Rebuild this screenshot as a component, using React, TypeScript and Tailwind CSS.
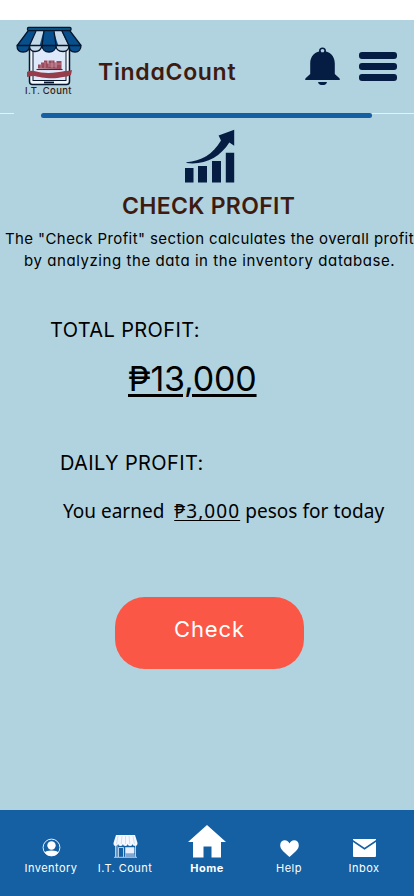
import React from "react";

function StoreLogo() {
  return (
    <svg className="block h-[62px] w-[72px]" viewBox="14 25 72 62" fill="none">
      <rect x="29.5" y="43" width="40" height="41.5" rx="3" fill="#f3f7fd" stroke="#07162d" strokeWidth="1.5" />
      <rect x="33" y="45" width="33" height="35.5" fill="#deeafb" stroke="#07162d" strokeWidth="1" />
      <path d="M44 82.5h10" stroke="#07162d" strokeWidth="1.800" />
      <path d="M38 68.5v-4h3v-2h3v-2h3.500v3h1v-3h6v2h2v-1.500h5v8z" fill="#9c4a5c" />
      <path d="M41 64v4M45 62v6M48 64h13M52 61v7M56 62v6M48 66h9" stroke="#deb9c6" strokeWidth=".5" />
      <path d="M36.500 69.500h26" stroke="#4d2535" strokeWidth="1.100" />
      <path d="M27 72q3-2 7-1c10 3 22 2 31 0q5 0 7-1l-1 5q-4 2-8 2c-12 3-23 0-29-1q-4 0-7 1z" fill="#963c4a" />
      <path d="M28 31h42l11 15H17z" fill="#07508d" />
      <path d="M35.500 31h8l-4 15h-10zM53.500 31h8l7 15h-10z" fill="#c3d8e9" />
      <g stroke="#07162d" strokeWidth="1.300" strokeLinejoin="round">
        <path d="M17 45.500c0 4 2 6.500 6 6.500 4 0 6.500-2.500 6.500-6.500z" fill="#07508d" />
        <path d="M29.500 45.500c0 4 2 6 5.500 6s6-2 7-6z" fill="#c3d8e9" />
        <path d="M42 45.500c0 4 3 6.500 7 6.500s7-2.500 7-6.500z" fill="#064178" />
        <path d="M56 45.500c0 4 3 6 7 6s6-2 6-6z" fill="#c3d8e9" />
        <path d="M69 45.500c0 4 2 6.500 6 6.500s6-3 6-6.500z" fill="#07508d" />
        <path d="M28 31 17.200 45.500M36 31l-6.500 14.500M44 31l-2 14.500M54 31l2 14.500M62 31l7 14.500M70 31l11 14.500" />
        <rect x="27.500" y="27.500" width="43.500" height="3" rx="1" fill="#0969a5" />
      </g>
    </svg>
  );
}

function Bell() {
  return (
    <svg className="block h-[38px] w-[36px]" viewBox="305 47 36 38">
      <circle cx="322.500" cy="51" r="2.700" fill="none" stroke="#061d43" strokeWidth="1.600" />
      <path d="M322.500 51c-7.500 0-12.300 5-12.300 12.500V74l-4.600 4.200q-1.200 1.900.7 1.900h32.400q1.900 0 .7-1.900L334.800 74V63.500C334.800 56 330 51 322.500 51zM318 81.900h9q-.5 3.300-4.500 3.300t-4.500-3.300z" fill="#061d43" />
      <ellipse cx="322.500" cy="51.400" rx="1.600" ry=".9" fill="#b1d3df" />
    </svg>
  );
}

function ProfitChart() {
  return (
    <svg className="block h-[54px] w-[52px]" viewBox="184 129 52 54" fill="#061d43">
      <path d="M185 168h8.500v14.500H185zM198 166h9v16.500h-9zM212 161h9v21.500h-9zM225.800 152.700h8.400v29.800h-8.400z" />
      <path d="M186.500 162.200c14.500-.7 26.500-8 34.500-21.600l-2.400-5.200 15.600-5.600v16l-4.900-3.400c-9.300 14.800-24.800 22.900-42.800 20.600z" />
    </svg>
  );
}

function InventoryIcon() {
  return (
    <svg className="block h-[19px] w-[19px]" viewBox="0 0 19 19">
      <circle cx="9.500" cy="9.500" r="8.400" fill="none" stroke="#fff" strokeWidth=".9" />
      <circle cx="9.500" cy="7.500" r="4.200" fill="#fff" />
      <path d="M2.500 14.500Q4 12.500 9.500 12.500t7 2Q14 18 9.500 18t-7-3.500z" fill="#fff" />
    </svg>
  );
}

function ShopIcon() {
  return (
    <svg className="block h-[24px] w-[25px]" viewBox="0 0 25 24">
      <path d="M3 1h19l2.500 8q0 3-2.400 3t-2.600-2q0 2-2.400 2t-2.400-2q0 2-2.400 2T9.900 10q0 2-2.400 2t-2.400-2q0 2-2.400 2T.5 9z" fill="#f5f8ff" />
      <path d="M5 2 3.500 10M9 2l-.8 8M12.500 2v8M16 2l.8 8M20 2l1.500 8" stroke="#b9cde4" strokeWidth=".6" />
      <path d="M1 23.300h23M2.500 12v11M4 12v11M5.500 23v-9.500h5V23M12.500 13.500h8.500v6h-8.500zM22.500 12v11M12.500 20v3M21 20v3" fill="none" stroke="#c8daef" strokeWidth=".9" />
      <path d="M13 14h8v5h-8z" fill="#e6effb" />
      <path d="M12.500 19.500H21V23h-8.500z" fill="#7fa7d2" />
    </svg>
  );
}

function HomeIcon() {
  return (
    <svg className="block h-[33px] w-[38px]" viewBox="0 0 38 33">
      <path d="M19 0 38 17h-5v15.500h-9.500V21.500h-8v11H5V17H0z" fill="#fff" />
    </svg>
  );
}

function HeartIcon() {
  return (
    <svg className="block h-[17px] w-[19px]" viewBox="0 0 19 17">
      <path d="M9.500 17C5 12.500.2 9.800.2 5.200.2 2 2.300.2 4.800.2c2.300 0 3.900 1.300 4.700 3.300.8-2 2.400-3.300 4.700-3.300 2.500 0 4.600 1.800 4.600 5 0 4.600-4.800 7.300-9.300 11.800z" fill="#fff" />
    </svg>
  );
}

function MailIcon() {
  return (
    <svg className="block h-[18px] w-[23px]" viewBox="0 0 23 18">
      <path d="M0 0h23v.9L11.500 8.700 0 .9zM0 2.900l11.500 7.800L23 2.900V17q0 1-1 1H1q-1 0-1-1z" fill="#fff" />
    </svg>
  );
}

export default function App() {
  return (
    <main className="flex h-[896px] w-[414px] flex-col overflow-hidden whitespace-nowrap bg-[#b1d3df] font-['Inter',sans-serif] text-black [font-feature-settings:'cv11']">
      <div className="h-5 shrink-0 bg-white" />
      <header className="flex h-[93px] shrink-0 items-start text-[#3e1a0f]">
        <div className="ml-[14px] w-[72px] pt-[5px]">
          <StoreLogo />
          <div className="ml-[11px] h-[8px] text-[9.500px] leading-[8px] font-medium tracking-[0.300px]">I.T. Count</div>
        </div>
        <h1 className="mt-[37px] ml-[12px] w-[206px] text-[23px] leading-[30px] font-semibold tracking-[0.700px]">TindaCount</h1>
        <div className="mt-[27px] ml-[1px]"><Bell /></div>
        <div className="mt-[32px] ml-[18px] flex w-[38px] flex-col gap-[4px]">
          <span className="h-[7px] rounded-[3px] bg-[#061d43]" />
          <span className="h-[7px] rounded-[3px] bg-[#061d43]" />
          <span className="h-[7px] rounded-[3px] bg-[#061d43]" />
        </div>
      </header>
      <div className="flex h-[5px] shrink-0 items-start">
        <span className="mr-[27px] h-px w-[14px] bg-[#e4f2f7]" />
        <span className="h-[5px] w-[331px] rounded-full bg-[#155fa3]" />
        <span className="h-px flex-1 bg-[#e4f2f7]" />
      </div>
      <section className="flex h-[692px] shrink-0 flex-col items-start">
        <div className="mt-[11px] ml-[184px]"><ProfitChart /></div>
        <h2 className="mt-[8px] ml-[122px] text-[23px] leading-[30px] font-semibold tracking-[0.300px] text-[#3e1a0f]">CHECK PROFIT</h2>
        <p className="mt-[7px] ml-[5px] text-[15px] leading-[22px]">
          <span className="block tracking-[0.400px]">The "Check Profit" section calculates the overall profit</span>
          <span className="ml-[19px] block tracking-[0.570px]">by analyzing the data in the inventory database.</span>
        </p>
        <h3 className="mt-[43px] ml-[50px] text-[20px] leading-[30px] tracking-[0.370px]">TOTAL PROFIT:</h3>
        <p className="mt-[14px] ml-[128px] text-[34px] leading-[40px] tracking-[-0.200px] underline decoration-[3px] underline-offset-[3px]">₱13,000</p>
        <h3 className="mt-[49px] ml-[60px] text-[20px] leading-[30px] tracking-[0.370px]">DAILY PROFIT:</h3>
        <p className="mt-[18px] ml-[63px] font-['Noto_Sans',sans-serif] text-[19px] leading-[30px] whitespace-pre">You earned  <span className="tracking-[1.080px] underline decoration-1 underline-offset-2">₱3,000</span><span className="tracking-[0.050px]"> pesos for today</span></p>
        <button className="mt-[71px] ml-[115px] h-[72px] w-[189px] rounded-[30px] bg-[#fb5747] pb-[7px] text-[22px] tracking-[0.900px] text-white">Check</button>
      </section>
      <nav className="flex h-[86px] shrink-0 bg-[#155fa3] text-[11px] leading-[14px] tracking-[0.450px] text-white">
        <div className="flex w-[102px] flex-col items-center pt-[28px]"><InventoryIcon /><span className="mt-[4px]">Inventory</span></div>
        <div className="flex w-[46px] flex-col items-center pt-[24px]"><ShopIcon /><span className="mt-[3px]">I.T. Count</span></div>
        <div className="ml-[21px] flex w-[76px] flex-col items-center pt-[15px]"><HomeIcon /><span className="mt-[3px] font-bold">Home</span></div>
        <div className="ml-[6px] flex w-[76px] flex-col items-center pt-[30px]"><HeartIcon /><span className="mt-[4px]">Help</span></div>
        <div className="flex w-[74px] flex-col items-center pt-[29px]"><MailIcon /><span className="mt-[4px]">Inbox</span></div>
      </nav>
    </main>
  );
}
